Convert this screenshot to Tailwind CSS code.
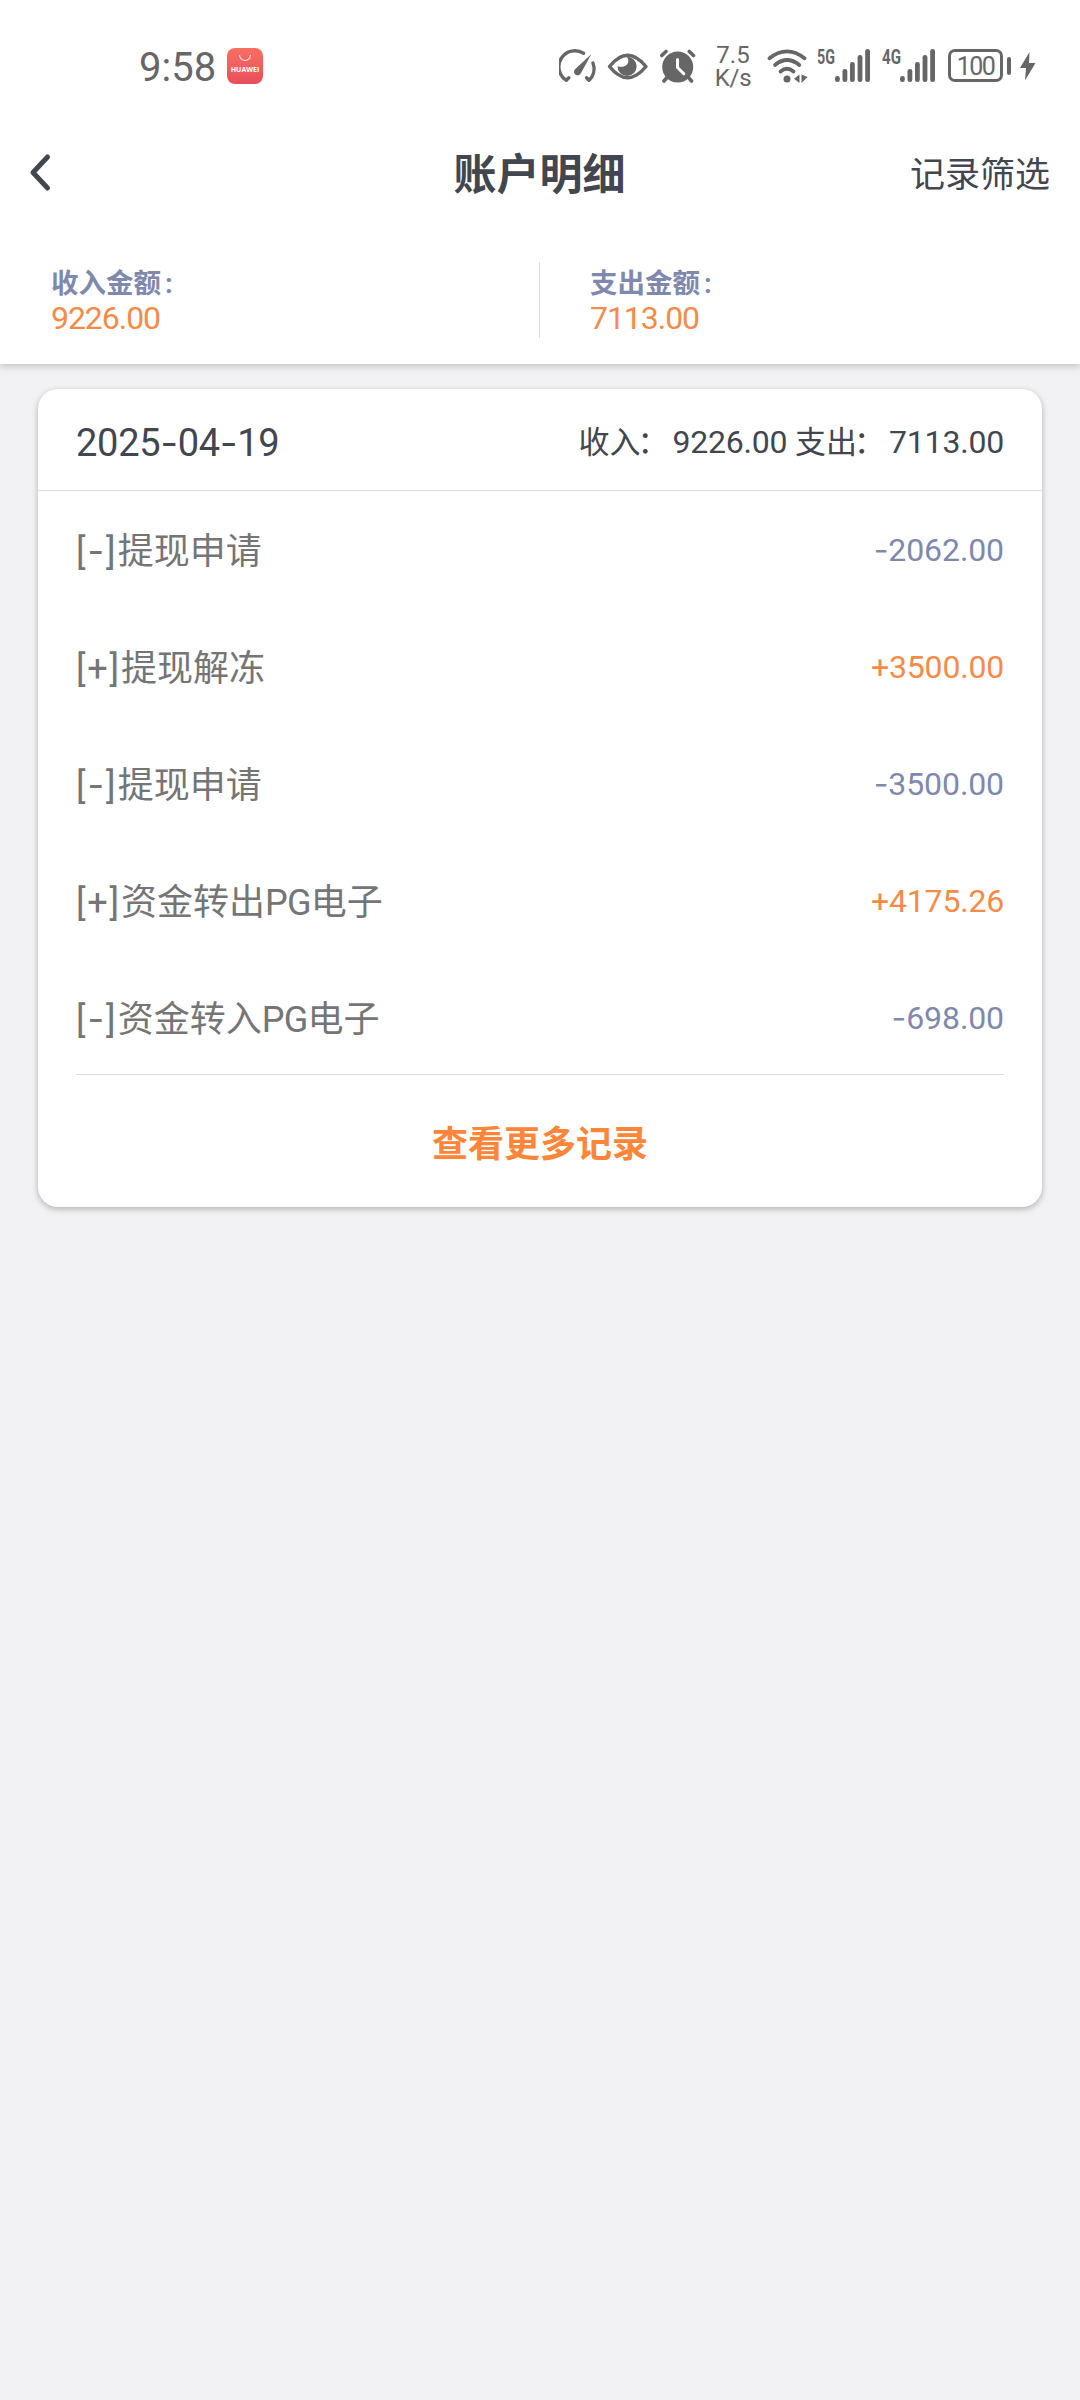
<!DOCTYPE html>
<html lang="zh-CN">
<head>
<meta charset="utf-8">
<title>账户明细</title>
<script src="https://cdn.jsdelivr.net/npm/@tailwindcss/browser@4"></script>
</head>
<body class="h-[2400px] w-[1080px] overflow-hidden bg-[#f2f2f5] font-['Roboto','Noto_Sans_CJK_SC',sans-serif] text-[#42464f]">
<header class="relative h-[364px] bg-white shadow-[0_2px_8px_rgba(0,0,0,0.22)]">
  <!-- status bar -->
  <div class="flex h-[131px] items-center pl-[139px] text-[#666]">
    <span class="w-[88px] pt-[4px] text-[40px] leading-none">9:58</span>
    <div class="relative h-9 w-9 rounded-lg bg-linear-to-b from-[#fa6e62] to-[#e84e5b]">
      <svg class="h-9 w-9" viewBox="0 0 36 36" fill="none" stroke="#fff" stroke-opacity=".8" stroke-width="1.2"><path d="M12.500 7a5.500 5.500 0 0 0 11 0"/></svg>
      <span class="absolute left-0 top-[17px] w-9 text-center font-['Open_Sans'] text-[7px] font-bold leading-[9px] text-white">HUAWEI</span>
    </div>
    <svg class="ml-[296px] h-9 w-[38px]" viewBox="0 0 38 36" fill="none" stroke="currentColor" stroke-width="3.400" stroke-linecap="round" stroke-linejoin="round">
      <path d="M24.500 5.300A16 16 0 0 0 7.300 32.300L9.800 29.800"/><path d="M34 15A16 16 0 0 1 30 32.300L27.500 29.800"/>
      <path d="M32.300 6.300L22 25a3.600 3.600 0 1 1-5.700-4z" fill="currentColor" stroke="none"/>
    </svg>
    <svg class="ml-[10px] h-9 w-[42px]" viewBox="0 0 42 36">
      <path d="M2.500 18.500Q20.500-4 39 18.500Q20.500 41 2.500 18.500z" fill="none" stroke="currentColor" stroke-width="3.400" stroke-linejoin="round"/>
      <path d="M19.500 8.700a9.600 9.600 0 1 1-9 9.200c2.500 1.600 8.600 1.200 10.500-3c.8-2.200.300-4.600-1.500-6.200z" fill="currentColor"/>
    </svg>
    <svg class="ml-[11px] h-9 w-9" viewBox="0 0 36 36" fill="none" stroke="currentColor" stroke-width="3.600" stroke-linecap="round">
      <circle cx="17.700" cy="19" r="15.500" fill="currentColor" stroke="none"/>
      <path d="M1.800 7.500L6 3.500M33.500 7.500L29.300 3.500M7 29.500L4 33M28.500 29.500L31.500 33"/>
      <path d="M17.500 11.500v8l6.300 6.300" stroke="#fff" stroke-width="3"/>
    </svg>
    <div class="ml-[18px] w-[38px] pt-[2px] text-center text-[24px] leading-[23px]"><div>7.5</div><div class="tracking-[-0.200px]">K/s</div></div>
    <svg class="ml-[15px] h-9 w-[43px]" viewBox="0 0 43 36" fill="none" stroke="currentColor" stroke-width="3.700" stroke-linecap="round">
      <path d="M2.500 10.300Q20 -3.500 37.500 10.300"/><path d="M8 17Q20 7 32.300 17"/><path d="M13.500 23.500Q20 18 26.500 23.500"/>
      <g fill="currentColor" stroke="none"><circle cx="20" cy="31" r="3.500"/><path d="M32.500 26.500v8.500l-5.500-4.300zM34.500 26.500v8.500l6-6z"/></g>
    </svg>
    <span class="mb-[16px] ml-[7px] w-[18px] origin-left scale-x-[.68] text-[21px] font-bold leading-none">5G</span>
    <svg class="h-9 w-9" viewBox="0 0 36 36" fill="currentColor"><rect x="0" y="28" width="4.800" height="6" rx="2.300"/><rect x="7.500" y="21" width="4.800" height="13" rx="2.300"/><rect x="15" y="14" width="4.800" height="20" rx="2.300"/><rect x="22.600" y="7" width="4.800" height="27" rx="2.300"/><rect x="30.200" y="1" width="4.800" height="33" rx="2.300"/></svg>
    <span class="mb-[16px] ml-[11px] w-[18px] origin-left scale-x-[.72] text-[21px] font-bold leading-none">4G</span>
    <svg class="h-9 w-9" viewBox="0 0 36 36" fill="currentColor"><rect x="0" y="28" width="4.800" height="6" rx="2.300"/><rect x="7.500" y="21" width="4.800" height="13" rx="2.300"/><rect x="15" y="14" width="4.800" height="20" rx="2.300"/><rect x="22.600" y="7" width="4.800" height="27" rx="2.300"/><rect x="30.200" y="1" width="4.800" height="33" rx="2.300"/></svg>
    <div class="ml-[12px] flex h-[33px] w-[55px] items-center justify-center rounded-[7px] border-[3px] border-current pt-px text-[25px] leading-none tracking-[-1.500px]">100</div>
    <div class="ml-1 h-[18px] w-1 rounded-full bg-current"></div>
    <svg class="ml-[9px] h-[30px] w-4" viewBox="0 0 16 30" fill="currentColor"><path d="M9.500 1L0 17h6L5 29.500L15.500 12H9z"/></svg>
  </div>
  <!-- title bar -->
  <div class="grid h-[87px] grid-cols-3 items-center pl-[29px] pr-[30px]">
    <svg class="mb-1 h-10 w-6" viewBox="0 0 24 40" fill="none" stroke="currentColor" stroke-width="5" stroke-linecap="round" stroke-linejoin="round"><path d="M18.500 4L4 19.500L18.500 35"/></svg>
    <h1 class="pt-[2px] text-center text-[43px] font-bold leading-none">账户明细</h1>
    <span class="pt-[2px] text-right text-[35px] leading-none">记录筛选</span>
  </div>
  <!-- totals -->
  <div class="mt-11 grid h-[76px] grid-cols-[539px_541px]">
    <div class="pl-[51px] pt-[6px]">
      <div class="text-[27.500px] font-bold leading-8 text-[#7f89ad]">收入金额<span class="pl-1">:</span></div>
      <div class="text-[32px] leading-9 tracking-[-1.050px] text-[#f58b48]">9226.00</div>
    </div>
    <div class="border-l border-[#ddd] pl-[50px] pt-[6px]">
      <div class="text-[27.500px] font-bold leading-8 text-[#7f89ad]">支出金额<span class="pl-1">:</span></div>
      <div class="text-[32px] leading-9 tracking-[-1.050px] text-[#f58b48]">7113.00</div>
    </div>
  </div>
</header>
<main class="mx-[38px] mt-[25px] h-[818px] rounded-[20px] bg-white shadow-[0_2px_6px_rgba(0,0,0,0.28)]">
  <div class="flex h-[102px] items-center justify-between border-b border-[#ddd] px-[38px] pt-1">
    <span class="pt-px text-[38px] leading-none tracking-[-0.250px]">2025<span class="font-['Inter']">-</span>04<span class="font-['Inter']">-</span>19</span>
    <span class="text-[31px] leading-none">收入<span class="mr-1 -ml-[3px]">：</span><span class="text-[32px] tracking-[-0.200px]">9226.00</span> 支出<span class="mr-1 -ml-[3px]">：</span><span class="text-[32px] tracking-[-0.200px]">7113.00</span></span>
  </div>
  <div class="mx-[38px] h-[584px] border-b border-[#ddd] text-[36px] text-[#757575]">
    <div class="flex h-[117px] items-center justify-between"><span class="pt-[4px]"><span class="tracking-[2px]">[<span class="font-['Inter']">-</span>]</span>提现申请</span><span class="text-[32px] tracking-[-0.100px] text-[#7f89ad]"><span class="font-['Inter']">-</span>2062.00</span></div>
    <div class="flex h-[117px] items-center justify-between"><span class="pt-[4px]"><span class="tracking-[1.800px]">[+]</span>提现解冻</span><span class="text-[32px] tracking-[-0.200px] text-[#f58b48]">+3500.00</span></div>
    <div class="flex h-[117px] items-center justify-between"><span class="pt-[4px]"><span class="tracking-[2px]">[<span class="font-['Inter']">-</span>]</span>提现申请</span><span class="text-[32px] tracking-[-0.100px] text-[#7f89ad]"><span class="font-['Inter']">-</span>3500.00</span></div>
    <div class="flex h-[117px] items-center justify-between"><span class="pt-[4px]"><span class="tracking-[1.800px]">[+]</span>资金转出<span class="tracking-[-0.700px]">PG</span>电子</span><span class="text-[32px] tracking-[-0.200px] text-[#f58b48]">+4175.26</span></div>
    <div class="flex h-[117px] items-center justify-between"><span class="pt-[4px]"><span class="tracking-[2px]">[<span class="font-['Inter']">-</span>]</span>资金转入<span class="tracking-[-0.700px]">PG</span>电子</span><span class="text-[32px] tracking-[-0.100px] text-[#7f89ad]"><span class="font-['Inter']">-</span>698.00</span></div>
  </div>
  <div class="flex h-[132px] items-center justify-center pt-[7px] text-[36px] font-bold text-[#ff8639]">查看更多记录</div>
</main>
</body>
</html>
